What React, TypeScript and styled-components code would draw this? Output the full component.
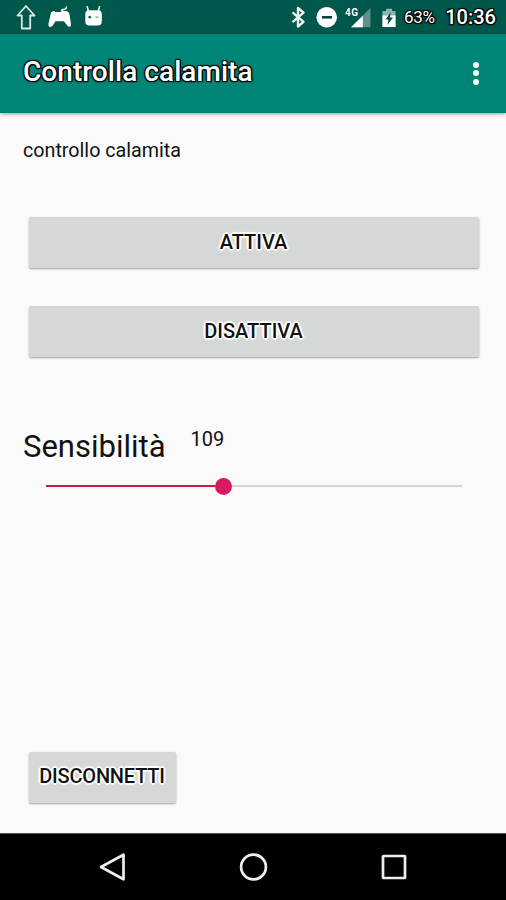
import React from 'react';
import styled, { createGlobalStyle } from 'styled-components';

const GlobalStyle = createGlobalStyle`
  * { box-sizing: border-box; }
  body { margin: 0; background: #fafafa; }
`;

const darkOutline =
  '-1px -1px 1px #000, 1px -1px 1px #000, -1px 1px 1px #000, 1px 1px 1px #000, 0 1px 1px #000, 1px 0 1px #000';
const lightOutline =
  '-1px -1px 1px #fff, 1px -1px 1px #fff, -1px 1px 1px #fff, 1px 1px 1px #fff, 0 2px 1px #fff, 0 -2px 1px #fff, 2px 0 1px #fff, -2px 0 1px #fff';

const Screen = styled.div`
  width: 506px;
  height: 900px;
  display: flex;
  flex-direction: column;
  background: #fafafa;
  color: #111;
  font-family: Roboto, 'Liberation Sans', sans-serif;
  overflow: hidden;
`;

const StatusBar = styled.header`
  height: 34px;
  flex: none;
  display: flex;
  align-items: center;
  background: #00574b;
  color: #fff;
`;

const StatusIcons = styled.svg`
  display: block;
  flex: none;
`;

const StatusText = styled.span<{ $size: number; $gap: number; $weight: number; $spacing: number }>`
  margin-left: ${(p) => p.$gap}px;
  font-size: ${(p) => p.$size}px;
  font-weight: ${(p) => p.$weight};
  letter-spacing: ${(p) => p.$spacing}px;
  line-height: 34px;
  white-space: nowrap;
  text-shadow: ${darkOutline};
`;

const AppBar = styled.div`
  height: 79px;
  flex: none;
  display: flex;
  justify-content: space-between;
  padding: 0 27px 0 23px;
  background: #008577;
  border-bottom: 1px solid #007c6f;
  box-shadow: 0 1px 4px rgba(0, 0, 0, 0.38);
  z-index: 1;
`;

const Title = styled.h1`
  margin: 0;
  padding-top: 18px;
  font-size: 28px;
  font-weight: 500;
  line-height: 40px;
  letter-spacing: 0.05px;
  color: #fff;
  white-space: nowrap;
  text-shadow: ${darkOutline};
`;

const Overflow = styled.div`
  display: flex;
  flex-direction: column;
  gap: 2.4px;
  padding-top: 28px;
`;

const Dot = styled.i`
  width: 6px;
  height: 6px;
  border-radius: 50%;
  background: #fff;
`;

const Content = styled.main`
  flex: 1;
  display: flex;
  flex-direction: column;
  align-items: flex-start;
`;

const Caption = styled.p`
  margin: 25px 0 0 23px;
  font-size: 19.7px;
  line-height: 26px;
  white-space: nowrap;
`;

const Button = styled.button<{ $width: number; $top: number; $spacing?: number }>`
  width: ${(p) => p.$width}px;
  height: 51px;
  flex: none;
  margin: ${(p) => p.$top}px 0 0 28.5px;
  padding: 0 0 2px;
  border: 0;
  border-radius: 2px;
  background: #d6d7d7;
  box-shadow: 0 1px 2px rgba(0, 0, 0, 0.36);
  font: 500 20px/24px Roboto, 'Liberation Sans', sans-serif;
  letter-spacing: ${(p) => p.$spacing ?? 0}px;
  color: #111;
  white-space: nowrap;
  text-shadow: ${lightOutline};
`;

const SensitivityRow = styled.div`
  display: flex;
  align-items: flex-start;
  margin: 70px 0 0 23px;
`;

const SensitivityLabel = styled.label`
  width: 167.5px;
  font-size: 31px;
  line-height: 40px;
`;

const SensitivityValue = styled.output`
  font-size: 20px;
  line-height: 24px;
`;

const Slider = styled.div`
  width: 416px;
  height: 18px;
  margin: 10px 0 0 46px;
  display: flex;
  align-items: center;
`;

const Track = styled.div<{ $filled?: boolean }>`
  flex: ${(p) => (p.$filled ? '0 0 169px' : '1')};
  height: 2px;
  background: ${(p) => (p.$filled ? '#d0193f' : '#d4d4d4')};
`;

const Thumb = styled.div`
  width: 17px;
  height: 17px;
  border-radius: 50%;
  background: #d81b60;
`;

const NavBar = styled.nav`
  height: 67px;
  flex: none;
  display: flex;
  align-items: center;
  justify-content: center;
  gap: 100px;
  background: #000;
  border-top: 1px solid #555;
`;

const NavIcon = styled.svg`
  width: 40px;
  height: 40px;
  fill: none;
  stroke: #eee;
  stroke-width: 2.7;
  stroke-linejoin: round;
`;

const Network = styled.text`
  font: 700 10px Roboto, sans-serif;
  fill: #fff;
`;

export default function App() {
  return (
    <>
      <GlobalStyle />
      <Screen>
        <StatusBar>
          <StatusIcons width="110" height="34" viewBox="0 0 110 34">
            <path d="M26 6 L34.5 15.5 H30.2 V28.5 H21.8 V15.5 H17.5 Z" fill="none" stroke="#dfe8e6" strokeWidth="1.8" strokeLinejoin="round" />
            <path d="M51 12.5 Q52 11 54 11 L55.5 12 H60 L61.5 11.5 L61 9.7 Q61.3 8.8 63 8.8 L65 8.5 L66 6.3 L67.2 6.8 L66.3 9.5 L63.2 10 L63.4 11 H66 Q68.5 11 69.3 13.5 L71 24 Q71.2 26.8 69.3 26.8 Q67.8 26.8 65.5 23.2 L64 21.2 H55.5 L53.5 24.5 Q51.5 27.5 49.8 27 Q48 26.5 48.4 24 Z" fill="#fff" />
            <path d="M52.7 15h3M54.2 13.5v3M64 14h1.2M66.5 16h1.2M64 18h1.2" stroke="#dbe9e6" strokeWidth=".8" />
            <path d="M88.4 11 L87.2 6.8 M98.3 11 L99.5 6.8" stroke="#fff" strokeWidth="1.5" strokeLinecap="round" />
            <path d="M85.3 14.2 Q85.3 10.3 89 10.3 H98 Q101.8 10.3 101.8 14.2 V21.5 Q101.8 25.5 97.5 25.5 H89.5 Q85.3 25.5 85.3 21.5 Z" fill="#fff" />
            <circle cx="89.8" cy="17.2" r="1.4" fill="#17665a" />
            <path d="M95.5 17.2h3" stroke="#78a9a1" strokeWidth="1.4" />
          </StatusIcons>
          <StatusIcons width="292" height="34" viewBox="110 0 292 34">
            <path d="M292.5 12.3 L303.5 21.8 L298 26.5 V8 L303.5 12.7 L292.5 22.2" fill="none" stroke="#f1f6f5" strokeWidth="2.4" strokeLinejoin="round" />
            <circle cx="326.7" cy="17.3" r="10.3" fill="#fff" />
            <path d="M322 17.3h10" stroke="#003d34" strokeWidth="2.5" />
            <path d="M370.5 8 V27.2 H351 Z" fill="#5d9189" />
            <path d="M362.8 15.7 V27.2 H351 Z" fill="#fff" />
            <Network x="345" y="16.3" textLength="13" stroke="#123d37" strokeWidth="1.2" paintOrder="stroke">4G</Network>
            <path d="M386 8.8 H392 V11 H395.5 V27 H382.5 V11 H386 Z" fill="#8eb3ad" />
            <path d="M382.5 15.5 H395.5 V27 H382.5 Z" fill="#fff" />
            <path d="M390.7 12.2 L385.5 19.5 H388.5 L387.4 25 L393 17.5 H389.8 Z" fill="#00493f" />
          </StatusIcons>
          <StatusText $size={17} $gap={2} $weight={400} $spacing={-0.3}>63%</StatusText>
          <StatusText $size={20} $gap={10.5} $weight={500} $spacing={0}>10:36</StatusText>
        </StatusBar>
        <AppBar>
          <Title>Controlla calamita</Title>
          <Overflow>
            <Dot />
            <Dot />
            <Dot />
          </Overflow>
        </AppBar>
        <Content>
          <Caption>controllo calamita</Caption>
          <Button $width={450} $top={53}>ATTIVA</Button>
          <Button $width={450} $top={38}>DISATTIVA</Button>
          <SensitivityRow>
            <SensitivityLabel>Sensibilità</SensitivityLabel>
            <SensitivityValue>109</SensitivityValue>
          </SensitivityRow>
          <Slider>
            <Track $filled />
            <Thumb />
            <Track />
          </Slider>
          <Button $width={147} $top={256.5} $spacing={-0.2}>DISCONNETTI</Button>
        </Content>
        <NavBar>
          <NavIcon viewBox="0 0 40 40">
            <path d="M8 20 L30.5 7.7 V32.3 Z" />
          </NavIcon>
          <NavIcon viewBox="0 0 40 40">
            <circle cx="20.5" cy="20" r="12.4" />
          </NavIcon>
          <NavIcon viewBox="0 0 40 40">
            <rect x="10" y="9" width="22" height="22" rx="0.5" />
          </NavIcon>
        </NavBar>
      </Screen>
    </>
  );
}
